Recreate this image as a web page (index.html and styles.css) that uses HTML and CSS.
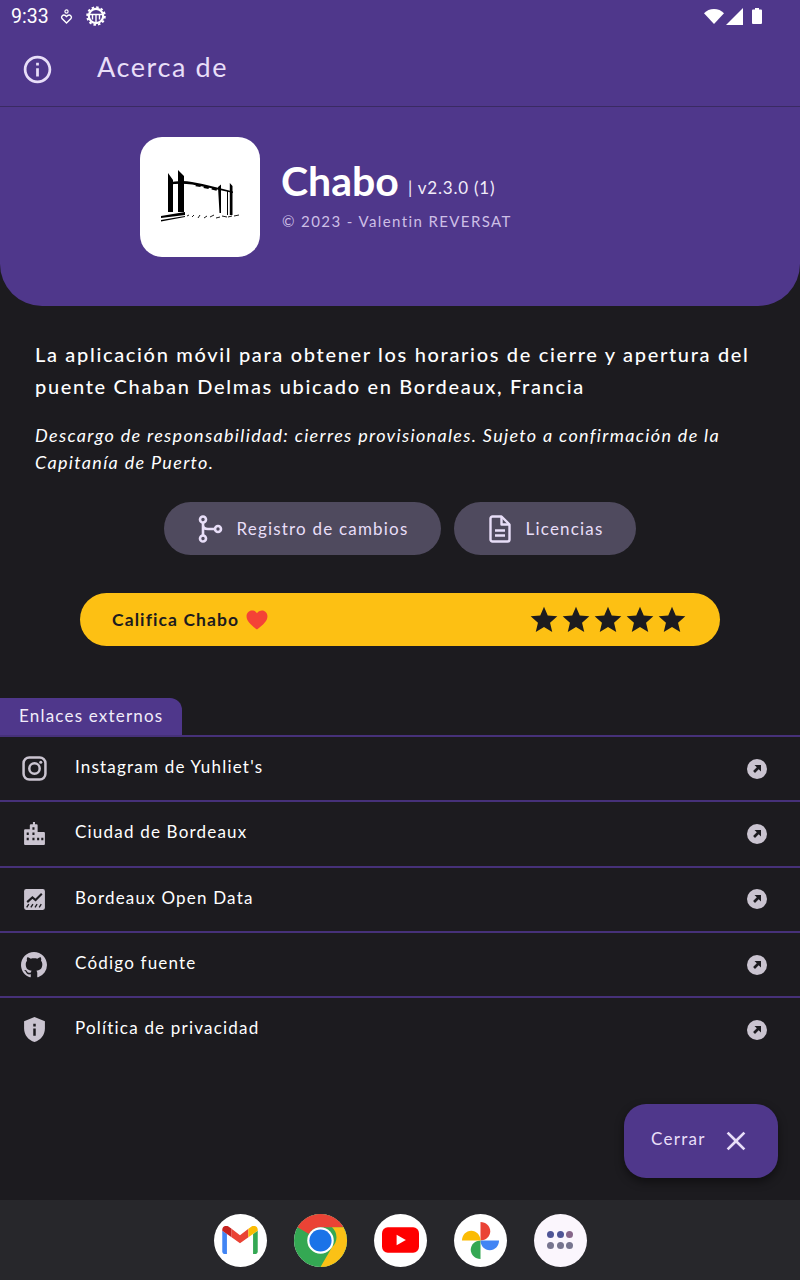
FILE: index.html
```html
<!DOCTYPE html>
<html lang="es">
<head>
  <meta charset="UTF-8">
  <meta name="viewport" content="width=device-width, initial-scale=1.0">
  <title>Chabo - Acerca de</title>
  <link rel="stylesheet" href="styles.css">
</head>
<body>
  <svg class="sprites" width="0" height="0">
    <symbol id="open-link" viewBox="0 0 20 20">
      <circle cx="10" cy="10" r="10" fill="#cac4d0"/>
      <path d="M7.5 6h6.500v6.500l-2.300-2.300-3.700 3.700-1.900-1.900 3.700-3.700z" fill="#1c1b1f"/>
    </symbol>
    <symbol id="star" viewBox="0 0 24 24">
      <path d="M12 17.270 18.180 21l-1.640-7.030L22 9.240l-7.190-.61L12 2 9.190 8.630 2 9.240l5.460 4.730L5.820 21z"/>
    </symbol>
  </svg>

  <header class="top">
    <!-- Barra de estado -->
    <div class="status-bar">
      <span class="clock">9:33</span>
      <svg class="status-small" viewBox="0 0 13 15"><circle cx="6.500" cy="2.500" r="1.600" fill="none" stroke="#fff" stroke-width="1.200"/><path d="M6.500 14 2 9.600a2.300 2.300 0 0 1 3.200-3.200l1.300 1.100 1.300-1.100a2.300 2.300 0 0 1 3.200 3.200z" fill="none" stroke="#fff" stroke-width="1.400"/></svg>
      <svg class="status-gear" viewBox="0 0 20 20"><circle cx="10" cy="10" r="7.200" fill="none" stroke="#fff" stroke-width="2.200"/><circle cx="10" cy="10" r="8.800" fill="none" stroke="#fff" stroke-width="2" stroke-dasharray="2.500 2.100"/><path d="M3 8.500h14M10 8.500V16M6.500 8.500v5M13.500 8.500v5" stroke="#fff" stroke-width="1.400" fill="none"/></svg>
      <span class="status-right">
        <svg class="st-wifi" viewBox="0 0 20 15"><path d="M10 15 0 4.200C2.600 1.600 6.100 0 10 0s7.400 1.600 10 4.200z" fill="#fff"/></svg>
        <svg class="st-signal" viewBox="0 0 16 16"><path d="M0 16 16 0v16z" fill="#fff"/></svg>
        <svg class="st-batt" viewBox="0 0 10 16"><path d="M3 0h4v1.500h2a1 1 0 0 1 1 1V15a1 1 0 0 1-1 1H1a1 1 0 0 1-1-1V2.500a1 1 0 0 1 1-1h2z" fill="#fff"/></svg>
      </span>
    </div>

    <div class="app-bar">
      <svg class="app-bar-icon" viewBox="0 0 24 24"><path fill="#e8def8" d="M11 7h2v2h-2zm0 4h2v6h-2zm1-9C6.480 2 2 6.480 2 12s4.480 10 10 10 10-4.480 10-10S17.520 2 12 2zm0 18c-4.410 0-8-3.590-8-8s3.590-8 8-8 8 3.590 8 8-3.590 8-8 8z"/></svg>
      <h1 class="app-bar-title">Acerca de</h1>
    </div>

    <!-- Logo y nombre -->
    <div class="hero">
      <div class="logo">
        <svg viewBox="0 0 120 120" width="120" height="120">
          <path d="M28 36l5 7v32h-5z M38 33l6 6v36h-6z" fill="#000"/>
          <path d="M28 45.500c8-1.500 16-2 24-.5 14 2.500 28 6 41 9.500v1.500C78 52.500 64 49.500 52 47.500c-8-1.200-16-1-24 .3z" fill="#000"/>
          <path d="M56 47l5 .8-.5 2.200-5-.8zM64 49l5 1-.5 2-5-1zM72 50.500l5 1.200-.5 2-5-1.200z" fill="#000"/>
          <path d="M78 50l3-2.500V76h-1.500zM89.800 46l2.700 3v29h-2.700zM87 54h1v24h-1z" fill="#000"/>
          <path d="M21 79l24-4v3l-24 3z M21 83l24-4v1l-24 4.500z" fill="#000"/>
          <path d="M47 79l2-1M52 80l2-2M58 81l2-3M64 81l3-2M70 80l4-2M76 81l4-1M82 79l5 1M88 80l4-1M94 79l5-1" stroke="#000" stroke-width=".9" fill="none"/>
        </svg>
      </div>
      <div class="hero-text">
        <div class="hero-name"><span class="app-name">Chabo</span> <span class="app-version">| v2.3.0 (1)</span></div>
        <div class="hero-copy">© 2023 - Valentin REVERSAT</div>
      </div>
    </div>
  </header>

  <main class="content">
    <p class="intro">La aplicación móvil para obtener los horarios de cierre y apertura del puente Chaban Delmas ubicado en Bordeaux, Francia</p>
    <p class="disclaimer">Descargo de responsabilidad: cierres provisionales. Sujeto a confirmación de la Capitanía de Puerto.</p>

    <div class="chips">
      <a class="chip">
        <svg viewBox="0 0 24 28"><g fill="none" stroke="#e8def8" stroke-width="2.600"><circle cx="5" cy="4.500" r="3"/><circle cx="5" cy="23.500" r="3"/><circle cx="20" cy="14" r="3"/><path d="M5 7.500v13M5 10c0 3 2 4 5 4h7"/></g></svg>
        Registro de cambios
      </a>
      <a class="chip">
        <svg viewBox="0 0 22 28"><g fill="none" stroke="#e8def8" stroke-width="2.400" stroke-linejoin="round"><path d="M3.500 1.500h9l8 8v15a2 2 0 0 1-2 2h-15a2 2 0 0 1-2-2v-21a2 2 0 0 1 2-2z"/><path d="M12.500 1.500v8h8M6 15.500h10M6 20.500h10"/></g></svg>
        Licencias
      </a>
    </div>

    <a class="rate">
      <span class="rate-label">Califica Chabo
        <svg class="heart" viewBox="0 0 24 22"><path d="M12 21.500C5 16 .5 12 .5 6.800.5 3.200 3.200.5 6.500.5c2.200 0 4.300 1 5.500 3 1.200-2 3.300-3 5.500-3 3.300 0 6 2.700 6 6.300C23.500 12 19 16 12 21.500z" fill="#f44336"/></svg>
      </span>
      <span class="stars">
        <svg><use href="#star"/></svg>
        <svg><use href="#star"/></svg>
        <svg><use href="#star"/></svg>
        <svg><use href="#star"/></svg>
        <svg><use href="#star"/></svg>
      </span>
    </a>

    <!-- Enlaces externos -->
    <div class="links-tab">Enlaces externos</div>
    <ul class="links">
      <li class="link-row">
        <svg class="link-icon" viewBox="0 0 24 24"><g fill="none" stroke="#cac4d0" stroke-width="2.400"><rect x="1.500" y="1.500" width="21" height="21" rx="5.500"/><circle cx="12" cy="12" r="5"/></g><circle cx="18" cy="6" r="1.500" fill="#cac4d0"/></svg>
        <span class="link-label">Instagram de Yuhliet's</span>
        <svg class="link-open"><use href="#open-link"/></svg>
      </li>
      <li class="link-row">
        <svg class="link-icon" viewBox="0 0 24 24"><path fill="#cac4d0" fill-rule="evenodd" d="M10.500 1h2v2h1.500a1 1 0 0 1 1 1v6.500h6a1 1 0 0 1 1 1V22a1 1 0 0 1-1 1H3a1 1 0 0 1-1-1V9a1 1 0 0 1 1-1h4.500V4a1 1 0 0 1 1-1h2z M10 6v2.500h2V6z M4.500 11v2.500h2V11z M10 11v2.500h2V11z M4.500 16v2.500h2V16z M10 16v2.500h2V16z M14.500 16v2.500h2V16z M18.500 16v2.500h2V16z"/></svg>
        <span class="link-label">Ciudad de Bordeaux</span>
        <svg class="link-open"><use href="#open-link"/></svg>
      </li>
      <li class="link-row">
        <svg class="link-icon" viewBox="0 0 24 24"><rect x="2" y="2" width="20" height="20" rx="2" fill="#cac4d0"/><path d="M5 14.500l5-4.500 3 2.500 6-6" fill="none" stroke="#1c1b1f" stroke-width="2"/><path d="M4.500 19.500l2-3M8.500 19.500l2-3M12.500 19.500l2-3M16.500 19.500l2-3" stroke="#1c1b1f" stroke-width="1.300"/></svg>
        <span class="link-label">Bordeaux Open Data</span>
        <svg class="link-open"><use href="#open-link"/></svg>
      </li>
      <li class="link-row">
        <svg class="link-icon link-icon-git" viewBox="0 0 16 16"><path fill="#cac4d0" d="M8 0C3.580 0 0 3.580 0 8c0 3.540 2.290 6.530 5.470 7.590.4.070.550-.170.550-.380 0-.190-.010-.820-.010-1.490-2.010.370-2.530-.490-2.690-.940-.090-.230-.480-.940-.820-1.130-.280-.150-.680-.520-.010-.530.630-.010 1.080.580 1.230.820.720 1.210 1.870.870 2.330.660.070-.520.280-.870.510-1.070-1.780-.200-3.640-.890-3.640-3.950 0-.870.310-1.590.820-2.150-.080-.200-.360-1.020.080-2.120 0 0 .670-.210 2.200.820.640-.180 1.320-.270 2-.270s1.360.090 2 .270c1.530-1.040 2.200-.820 2.200-.820.440 1.100.160 1.920.080 2.120.510.560.820 1.270.820 2.150 0 3.070-1.870 3.750-3.650 3.950.290.250.540.730.540 1.480 0 1.070-.010 1.930-.010 2.200 0 .210.150.460.550.380A8.013 8.013 0 0 0 16 8c0-4.420-3.580-8-8-8z"/></svg>
        <span class="link-label">Código fuente</span>
        <svg class="link-open"><use href="#open-link"/></svg>
      </li>
      <li class="link-row">
        <svg class="link-icon" viewBox="0 0 24 24"><path fill="#cac4d0" fill-rule="evenodd" d="M12 0 2 4v7c0 6.200 4.200 11.300 10 13 5.800-1.700 10-6.800 10-13V4z M10.800 6.500h2.400v2.500h-2.400z M10.800 11h2.400v7h-2.400z"/></svg>
        <span class="link-label">Política de privacidad</span>
        <svg class="link-open"><use href="#open-link"/></svg>
      </li>
    </ul>

    <a class="fab">
      <span class="fab-label">Cerrar</span>
      <svg viewBox="0 0 24 24"><path fill="#e8def8" d="M19 6.410 17.590 5 12 10.590 6.410 5 5 6.410 10.590 12 5 17.590 6.410 19 12 13.410 17.590 19 19 17.590 13.410 12z"/></svg>
    </a>
  </main>

  <!-- Dock de apps -->
  <footer class="dock">
    <div class="dock-app">
      <svg viewBox="0 0 38 30" width="36" height="28">
        <path d="M0 5l5 3.500V30H3a3 3 0 0 1-3-3z" fill="#4285f4"/>
        <path d="M38 5l-5 3.500V30h2a3 3 0 0 0 3-3z" fill="#34a853"/>
        <path d="M5 8.500 0 5V4C0 .5 4-1.500 7 .8l3 2.200v9z" fill="#c5221f"/>
        <path d="M10 3l9 7 9-7v9l-9 6.500L10 12z" fill="#ea4335"/>
        <path d="M28 3l3-2.200C34-1.500 38 .5 38 4v1l-5 3.500-5 3.500z" fill="#fbbc04"/>
      </svg>
    </div>
    <div class="dock-app">
      <svg viewBox="0 0 54 54" width="53" height="53">
        <circle cx="27" cy="27" r="27" fill="#34a853"/>
        <path d="M27 0a27 27 0 0 1 23.400 13.500H27A13.500 13.500 0 0 0 15.300 20.300L3.600 13.500A27 27 0 0 1 27 0z" fill="#ea4335"/>
        <path d="M50.400 13.500A27 27 0 0 1 27 54l11.700-20.200A13.500 13.500 0 0 0 38.700 13.500z" fill="#fbc116"/>
        <circle cx="27" cy="27" r="13.500" fill="#fff"/>
        <circle cx="27" cy="27" r="11.300" fill="#1a73e8"/>
      </svg>
    </div>
    <div class="dock-app">
      <svg viewBox="0 0 38 26" width="37" height="26"><rect width="38" height="26" rx="6" fill="#f00"/><path d="M15 7.500v11l9.500-5.500z" fill="#fff"/></svg>
    </div>
    <div class="dock-app">
      <svg viewBox="0 0 40 40" width="39" height="39">
        <path d="M20 20V1c5.500 0 10 4.300 10 9.500S25.500 20 20 20z" fill="#ea4335"/>
        <path d="M20 20h19c0 5.500-4.300 10-9.500 10S20 25.500 20 20z" fill="#4285f4"/>
        <path d="M20 20v19c-5.500 0-10-4.300-10-9.500S14.500 20 20 20z" fill="#34a853"/>
        <path d="M20 20H1c0-5.500 4.300-10 9.500-10S20 14.500 20 20z" fill="#fbbc04"/>
      </svg>
    </div>
    <div class="dock-app dock-grid">
      <i class="dot-a"></i><i class="dot-a"></i><i class="dot-b"></i>
      <i class="dot-c"></i><i class="dot-c"></i><i class="dot-c"></i>
    </div>
  </footer>
</body>
</html>
```

FILE: styles.css
```css
/* Tema oscuro con morado */
body {
  font-family: 'Lato', sans-serif;
  margin: 0;
  padding: 0;
  height: 1280px;
  display: flex;
  flex-direction: column;
  overflow: hidden;
  background: #1c1b1f;
  color: #fff;
}

.sprites {
  position: absolute;
}

/* Cabecera morada */
.top {
  background: #4f378b;
  height: 306px;
  border-radius: 0 0 42px 42px;
  flex-shrink: 0;
}

.status-bar {
  height: 32px;
  display: flex;
  align-items: center;
  padding: 0 12px 0 11px;
}

.clock {
  font-family: 'Roboto', sans-serif;
  font-size: 19.5px;
  margin-right: 11px;
}

.status-small {
  width: 13px;
  height: 15px;
  margin-right: 13px;
}

.status-gear {
  width: 20px;
  height: 20px;
}

.status-right {
  margin-left: auto;
  display: flex;
  align-items: center;
  gap: 2px;
  padding-right: 26px;
}

.st-wifi {
  width: 20px;
  height: 15px;
}

.st-signal {
  width: 17px;
  height: 17px;
}

.st-batt {
  width: 10px;
  height: 16px;
  margin-left: 7px;
}

.app-bar {
  height: 74px;
  display: flex;
  align-items: center;
  padding-left: 21px;
  border-bottom: 1px solid #3a2a62;
}

.app-bar-icon {
  width: 33px;
  height: 33px;
}

.app-bar-title {
  margin: -5px 0 0 43px;
  font-size: 27px;
  font-weight: 400;
  letter-spacing: 1.6px;
  color: #e8def8;
}

.hero {
  display: flex;
  align-items: center;
  gap: 22px;
  padding: 30px 0 0 140px;
}

.logo {
  width: 120px;
  height: 120px;
  background: #fff;
  border-radius: 22px;
}

.hero-text {
  margin: -8px 0 0 -1px;
}

.hero-name {
  display: flex;
  align-items: center;
  gap: 9px;
}

.app-name {
  font-size: 41px;
  font-weight: 700;
}

.app-version {
  font-size: 17px;
  letter-spacing: 0.8px;
  color: #f1ecf9;
  margin-top: 13px;
}

.hero-copy {
  font-size: 15px;
  letter-spacing: 1.4px;
  color: #cdbfe6;
  margin-top: 7px;
  margin-left: 1px;
}

/* Contenido principal */
.content {
  position: relative;
  flex: 1;
}

.intro {
  margin: 32px 35px 0;
  font-size: 20px;
  line-height: 32px;
  font-weight: 500;
  letter-spacing: 1.67px;
}

.disclaimer {
  margin: 20px 35px 0;
  font-size: 18px;
  line-height: 27px;
  font-style: italic;
  letter-spacing: 1.32px;
}

.chips {
  display: flex;
  justify-content: center;
  gap: 13px;
  margin-top: 26px;
}

.chip {
  height: 53px;
  display: flex;
  align-items: center;
  gap: 13px;
  border-radius: 27px;
  background: #4f4a5e;
  color: #e8def8;
  font-size: 17px;
  letter-spacing: 1.2px;
  padding: 0 32px 0 33px;
}

.chip svg {
  width: 26px;
  height: 28px;
}

.rate {
  margin: 38px 80px 0;
  height: 53px;
  border-radius: 27px;
  background: #fdc013;
  color: #1c1b1f;
  display: flex;
  align-items: center;
  justify-content: space-between;
  padding: 0 32px;
  font-size: 17.5px;
  font-weight: 700;
  letter-spacing: 1.1px;
}

.rate-label {
  display: flex;
  align-items: center;
  gap: 7px;
}

.heart {
  width: 22px;
  height: 20px;
}

.stars {
  display: flex;
}

.stars svg {
  width: 32px;
  height: 32px;
  fill: #1c1b1f;
}

.links-tab {
  margin-top: 52px;
  width: 182px;
  height: 37px;
  box-sizing: border-box;
  padding: 7px 0 0 19px;
  background: #4f378b;
  border-radius: 0 12px 0 0;
  font-size: 17px;
  letter-spacing: 1.2px;
  color: #f1ecf9;
}

.links {
  list-style: none;
  margin: 0;
  padding: 0;
}

.link-row {
  height: 65.3px;
  box-sizing: border-box;
  display: flex;
  align-items: center;
  border-top: 2px solid #463179;
  padding: 0 33px 0 22px;
}

.link-icon {
  width: 25px;
  height: 25px;
  flex-shrink: 0;
}

.link-icon-git {
  width: 26px;
  height: 26px;
  margin-left: -1px;
}

.link-label {
  margin-left: 28px;
  flex: 1;
  font-size: 17px;
  letter-spacing: 1.2px;
  margin-top: -4px;
}

.link-open {
  width: 20px;
  height: 20px;
}

/* Botón flotante */
.fab {
  position: absolute;
  right: 22px;
  top: 798px;
  width: 154px;
  height: 74px;
  box-sizing: border-box;
  border-radius: 22px;
  background: #4f378b;
  box-shadow: 0 4px 10px rgba(0, 0, 0, 0.45);
  color: #e8def8;
  font-size: 17px;
  letter-spacing: 1.3px;
  display: flex;
  align-items: center;
  padding-left: 27px;
  gap: 14px;
}

.fab-label {
  margin-top: -6px;
}

.fab svg {
  width: 32px;
  height: 32px;
}

/* Dock */
.dock {
  height: 80px;
  background: #27272b;
  display: flex;
  align-items: center;
  justify-content: center;
  gap: 27px;
  flex-shrink: 0;
}

.dock-app {
  width: 53px;
  height: 53px;
  border-radius: 50%;
  background: #fff;
  display: flex;
  align-items: center;
  justify-content: center;
}

.dock-grid {
  background: #fbf6fd;
  display: grid;
  grid-template-columns: repeat(3, 7px);
  gap: 4px 2.2px;
  align-content: center;
  justify-content: center;
}

.dock-grid i {
  width: 7px;
  height: 7px;
  border-radius: 50%;
}

.dot-a { background: #4f5596; }
.dot-b { background: #86668a; }
.dot-c { background: #77758f; }
```
